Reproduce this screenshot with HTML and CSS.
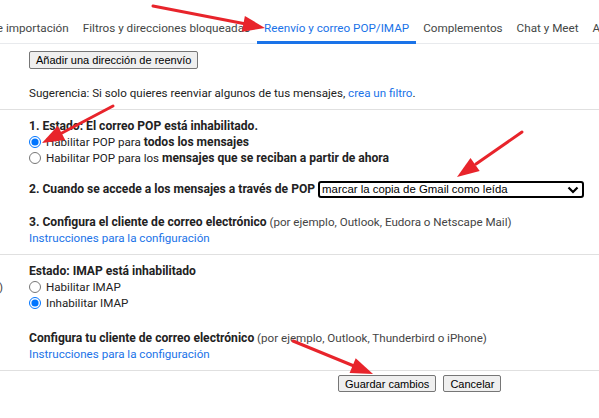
FILE: index.html
```html
<!DOCTYPE html>
<html lang="es">
<head>
  <meta charset="UTF-8">
  <title>Configuración - Reenvío y correo POP/IMAP</title>
  <link rel="stylesheet" href="styles.css">
</head>
<body>
  <nav class="tabs">
    <a class="tab">Cuentas e importación</a>
    <a class="tab">Filtros y direcciones bloqueadas</a>
    <a class="tab active">Reenvío y correo POP/IMAP</a>
    <a class="tab">Complementos</a>
    <a class="tab">Chat y Meet</a>
    <a class="tab">Avanzadas</a>
  </nav>

  <!-- Reenvío -->
  <section class="block first">
    <div class="side"></div>
    <div class="main">
      <button class="btn">Añadir una dirección de reenvío</button>
      <p class="line hint">Sugerencia: Si solo quieres reenviar algunos de tus mensajes, <a class="link">crea un filtro</a>.</p>
    </div>
  </section>

  <!-- Descarga POP -->
  <section class="block">
    <div class="side"></div>
    <div class="main">
      <p class="line bold">1. Estado: El correo POP está inhabilitado.</p>
      <label class="line opt"><input type="radio" name="pop" checked> Habilitar POP para <b>todos los mensajes</b></label>
      <label class="line opt"><input type="radio" name="pop"> Habilitar POP para los <b>mensajes que se reciban a partir de ahora</b></label>
      <div class="line pick">
        <b>2. Cuando se accede a los mensajes a través de POP</b>
        <span class="select">
          <select>
            <option>marcar la copia de Gmail como leída</option>
          </select>
          <svg class="chev" width="12" height="8" viewBox="0 0 12 8"><path d="M1.5 1.5 6 6 10.5 1.5" fill="none" stroke="#000" stroke-width="2.2"/></svg>
        </span>
      </div>
      <p class="line step"><b>3. Configura el cliente de correo electrónico</b> <span class="muted">(por ejemplo, Outlook, Eudora o Netscape Mail)</span></p>
      <a class="line link">Instrucciones para la configuración</a>
    </div>
  </section>

  <!-- Acceso IMAP -->
  <section class="block">
    <div class="side"><span class="side-text">(acceder a Gmail desde otros clientes mediante IMAP)</span></div>
    <div class="main">
      <p class="line bold">Estado: IMAP está inhabilitado</p>
      <label class="line opt"><input type="radio" name="imap"> Habilitar IMAP</label>
      <label class="line opt"><input type="radio" name="imap" checked> Inhabilitar IMAP</label>
      <p class="line step wide"><b>Configura tu cliente de correo electrónico</b> <span class="muted">(por ejemplo, Outlook, Thunderbird o iPhone)</span></p>
      <a class="line link">Instrucciones para la configuración</a>
    </div>
  </section>

  <div class="actions">
    <button class="btn">Guardar cambios</button>
    <button class="btn">Cancelar</button>
  </div>

  <!-- flechas de anotación -->
  <svg class="arrows" width="599" height="418" viewBox="0 0 599 418">
    <g stroke="#e8242b" stroke-width="3" stroke-linecap="round">
      <line x1="153" y1="6" x2="246" y2="24"/>
      <line x1="113" y1="106" x2="60" y2="134"/>
      <line x1="522" y1="132" x2="476" y2="164"/>
      <line x1="293" y1="341" x2="354" y2="366"/>
    </g>
    <g fill="#e8242b">
      <polygon points="265,28 241.9,31.7 244.9,15.9"/>
      <polygon points="42,143 57.8,125.7 65.2,139.9"/>
      <polygon points="457,177 470.5,157.9 479.7,171.1"/>
      <polygon points="373,374 349.6,373 355.7,358.2"/>
    </g>
  </svg>
</body>
</html>
```

FILE: styles.css
```css
/* General */
body {
  margin: 0;
  width: 599px;
  height: 418px;
  overflow: hidden;
  position: relative;
  background: #fff;
  font-family: Roboto, "Noto Sans", sans-serif;
  font-size: 11.6px;
  line-height: 16px;
  color: #222;
}

p {
  margin: 0;
}

/* Tabs */
.tabs {
  display: flex;
  white-space: nowrap;
  margin-left: -56px;
  border-bottom: 1px solid #e8eaed;
}

.tab {
  padding: 20px 7px 5px;
  font-size: 11.7px;
  color: #444746;
  border-bottom: 3px solid transparent;
  margin-bottom: -1px;
}

.tab.active {
  color: #1a73e8;
  border-bottom-color: #1a73e8;
}

/* Sections */
.block {
  display: grid;
  grid-template-columns: 29px 1fr;
  padding: 8px 0;
  border-bottom: 1px solid #e0e0e0;
}

.block.first {
  padding-top: 7px;
}

.side {
  display: flex;
  justify-content: flex-end;
  padding: 16px 26px 0 0;
  white-space: nowrap;
  color: #444;
}

.main {
  display: flex;
  flex-direction: column;
  align-items: flex-start;
  white-space: nowrap;
}

.line {
  display: block;
  height: 16px;
}

.bold,
b {
  font-weight: bold;
  font-size: 12.1px;
}

.hint {
  margin-top: 16px;
}

.muted {
  color: #444;
}

.link {
  color: #1a73e8;
  text-decoration: none;
}

/* Radio options */
.opt {
  display: flex;
  align-items: center;
}

.opt input {
  width: 12px;
  height: 12px;
  margin: 0 5px 0 0;
}

.opt b {
  margin-left: 3px;
}

/* Select row */
.pick {
  display: flex;
  align-items: center;
  margin-top: 14px;
  height: 18px;
}

.select {
  position: relative;
  margin-left: 3px;
}

.select select {
  appearance: none;
  display: block;
  width: 266px;
  height: 17px;
  padding: 0 0 0 2px;
  border: 2px solid #000;
  border-radius: 3px;
  background: #fff;
  font-family: "Liberation Sans", Arial, sans-serif;
  font-size: 11.4px;
  color: #000;
}

.chev {
  position: absolute;
  right: 5px;
  top: 5px;
}

.step {
  margin-top: 16px;
}

.step.wide {
  margin-top: 19px;
}

/* Buttons */
.btn {
  font-family: "Liberation Sans", Arial, sans-serif;
  font-size: 11px;
  height: 18px;
  padding: 0 6px;
  color: #000;
  background: #efefef;
  border: 1px solid #767676;
  border-radius: 2px;
}

.actions {
  display: flex;
  gap: 7px;
  padding: 4px 0 0 338px;
}

.actions .btn {
  height: 17px;
}

.arrows {
  position: absolute;
  top: 0;
  left: 0;
  pointer-events: none;
}
```
